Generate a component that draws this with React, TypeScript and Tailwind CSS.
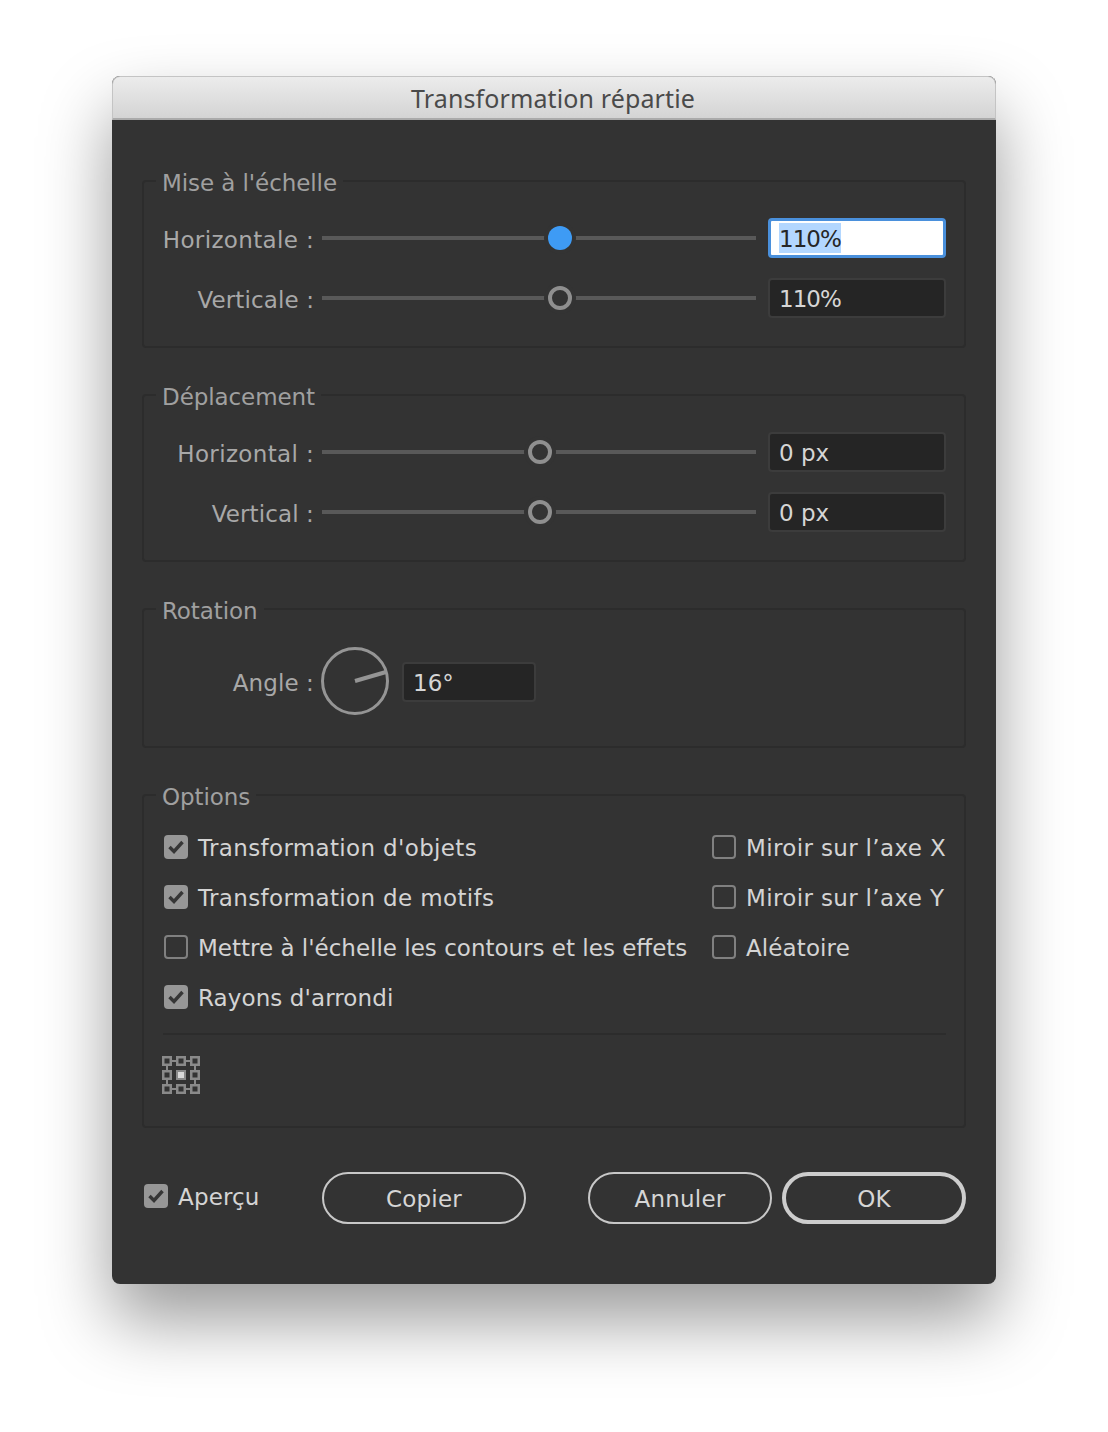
import type { ReactNode } from 'react';

const font = 'font-["DejaVu_Sans",sans-serif]';

function Group({ title, className, children }: { title: string; className: string; children: ReactNode }) {
  return (
    <div className={`rounded-[4px] border-2 border-[#2c2c2c] ${className}`}>
      <div className="-mt-[16px] ml-[12px] flex h-[28px] w-fit items-center bg-[#333333] px-[6px] pt-[6px] text-[23px] leading-none tracking-[-0.08px] text-[#a0a0a0]">
        {title}
      </div>
      {children}
    </div>
  );
}

function Label({ children, wide }: { children: ReactNode; wide?: boolean }) {
  return (
    <div className={`w-[170px] shrink-0 pt-[5px] text-right text-[23px] leading-none text-[#a8a8a8] ${wide ? 'tracking-[0.35px]' : 'tracking-[0.12px]'}`}>
      {children}
    </div>
  );
}

function Slider({ pos, active }: { pos: number; active?: boolean }) {
  return (
    <div className="relative ml-[8px] h-[4px] w-[434px] shrink-0 bg-[#595959]">
      <div
        className={`absolute top-1/2 h-[24px] w-[24px] -translate-x-1/2 -translate-y-1/2 rounded-full ring-4 ring-[#333333] ${
          active ? 'bg-[#3e9bf5]' : 'border-[4px] border-[#8f8f8f] bg-[#333333]'
        }`}
        style={{ left: pos }}
      />
    </div>
  );
}

function Field({ value, width = 'w-[178px]', tight }: { value: string; width?: string; tight?: boolean }) {
  return (
    <div className={`flex h-[40px] ${width} items-center rounded-[4px] border-2 border-[#3c3c3c] bg-[#252525] pl-[9px] pt-[3px] text-[23px] leading-none text-[#d6d6d6] ${tight ? 'tracking-[-1px]' : ''}`}>
      {value}
    </div>
  );
}

function SliderRow({ label, pos, value, active }: { label: string; pos: number; value: string; active?: boolean }) {
  const tight = value === '110%';
  return (
    <div className="flex h-[40px] items-center">
      <Label wide={label.startsWith('Horizontal')}>{label}</Label>
      <Slider pos={pos} active={active} />
      <div className="ml-[12px]">
        {active ? (
          <div className="flex h-[40px] w-[178px] items-center rounded-[4px] border-[3px] border-[#4a90dc] bg-white pl-[8px] text-[23px] leading-none tracking-[-1px] text-[#262626]">
            <span className="flex h-[30px] items-center bg-[#b3d7ff] pt-[3px]">{value}</span>
          </div>
        ) : (
          <Field value={value} tight={tight} />
        )}
      </div>
    </div>
  );
}

function Check({ checked, label, tracking = 'tracking-[0.35px]' }: { checked?: boolean; label: string; tracking?: string }) {
  return (
    <div className={`flex h-[24px] items-center whitespace-nowrap text-[23px] leading-none text-[#d4d4d4] ${tracking}`}>
      <span
        className={`flex h-[24px] w-[24px] shrink-0 items-center justify-center rounded-[4px] ${
          checked ? 'bg-[#979797]' : 'border-2 border-[#808080]'
        }`}
      >
        {checked && (
          <svg width="16" height="14" viewBox="0 0 16 14" fill="none">
            <path d="M1.5 7 L6 11.5 L14.5 2" stroke="#363636" strokeWidth="3.4" />
          </svg>
        )}
      </span>
      <span className="ml-[10px] pt-[2px]">{label}</span>
    </div>
  );
}

function PointGrid() {
  const cells = [
    [0, 0], [14, 0], [28, 0],
    [0, 14], [28, 14],
    [0, 28], [14, 28], [28, 28],
  ];
  return (
    <svg width="38" height="38" viewBox="0 0 38 38" fill="none">
      <path d="M10 5H14M24 5H28M10 33H14M24 33H28M5 10V14M33 10V14M5 24V28M33 24V28" stroke="#8a8a8a" strokeWidth="2" />
      {cells.map(([x, y]) => (
        <rect key={`${x}-${y}`} x={x + 1.25} y={y + 1.25} width="7.5" height="7.5" stroke="#8a8a8a" strokeWidth="2.5" />
      ))}
      <rect x="14" y="14" width="10" height="10" fill="#8a8a8a" />
      <rect x="16" y="16" width="6" height="6" fill="#d9d9d9" />
    </svg>
  );
}

function Button({ label, width, primary }: { label: string; width: string; primary?: boolean }) {
  return (
    <button
      className={`flex h-[52px] ${width} items-center justify-center rounded-full pt-[3px] text-[23px] leading-none tracking-[0.2px] text-[#d6d6d6] ${
        primary ? 'border-[4px] border-[#cdcdcd]' : 'border-2 border-[#c8c8c8]'
      }`}
    >
      {label}
    </button>
  );
}

export default function App() {
  return (
    <div className={`h-[1432px] w-[1108px] overflow-hidden bg-white pl-[112px] pt-[76px] ${font}`}>
      <div className="h-[1208px] w-[884px] rounded-[8px] bg-[#333333] shadow-[0_36px_70px_0_rgba(0,0,0,0.4)]">
        {/* タイトルバー */}
        <div className="flex h-[44px] items-center justify-center rounded-t-[8px] border border-b-2 border-[#c4c4c4] border-b-[#aaaaaa] bg-gradient-to-b from-[#ececec] to-[#d4d4d4] pr-[2px] pt-[2px] font-['Noto_Sans',sans-serif] text-[25px] leading-none tracking-[0.12px] text-[#4a4a4a]">
          Transformation répartie
        </div>

        <div className="flex flex-col px-[30px] pt-[60px]">
          <Group title="Mise à l'échelle" className="h-[168px]">
            <div className="flex flex-col gap-[20px] pt-[24px]">
              <SliderRow label="Horizontale :" pos={238} value="110%" active />
              <SliderRow label="Verticale :" pos={238} value="110%" />
            </div>
          </Group>

          <Group title="Déplacement" className="mt-[46px] h-[168px]">
            <div className="flex flex-col gap-[20px] pt-[24px]">
              <SliderRow label="Horizontal :" pos={218} value="0 px" />
              <SliderRow label="Vertical :" pos={218} value="0 px" />
            </div>
          </Group>

          <Group title="Rotation" className="mt-[46px] h-[140px]">
            <div className="mt-[25px] flex h-[68px] items-center">
              <Label>Angle :</Label>
              <svg className="ml-[7px] shrink-0" width="68" height="68" viewBox="0 0 68 68" fill="none">
                <circle cx="34" cy="34" r="32.5" stroke="#959595" strokeWidth="3" />
                <path d="M34 34 L65 25" stroke="#959595" strokeWidth="4" />
              </svg>
              <div className="ml-[13px] mt-[2px]">
                <Field value="16°" width="w-[134px]" />
              </div>
            </div>
          </Group>

          <Group title="Options" className="mt-[46px] h-[334px]">
            <div className="flex justify-between pl-[20px] pr-[18px] pt-[27px]">
              <div className="flex flex-col gap-[26px]">
                <Check checked label="Transformation d'objets" />
                <Check checked label="Transformation de motifs" />
                <Check label="Mettre à l'échelle les contours et les effets" tracking="tracking-normal" />
                <Check checked label="Rayons d'arrondi" tracking="tracking-[0.1px]" />
              </div>
              <div className="flex flex-col gap-[26px]">
                <Check label="Miroir sur l’axe X" />
                <Check label="Miroir sur l’axe Y" />
                <Check label="Aléatoire" tracking="tracking-[0.1px]" />
              </div>
            </div>
            <div className="ml-[19px] mr-[18px] mt-[24px] h-[2px] bg-[#2c2c2c]" />
            <div className="ml-[18px] mt-[21px]">
              <PointGrid />
            </div>
          </Group>

          <div className="mt-[44px] flex items-center">
            <div className="ml-[2px] w-[178px] -translate-y-[2px]">
              <Check checked label="Aperçu" tracking="tracking-[0.15px]" />
            </div>
            <Button label="Copier" width="w-[204px]" />
            <div className="ml-[62px]">
              <Button label="Annuler" width="w-[184px]" />
            </div>
            <div className="ml-[10px]">
              <Button label="OK" width="w-[184px]" primary />
            </div>
          </div>
        </div>
      </div>
    </div>
  );
}
